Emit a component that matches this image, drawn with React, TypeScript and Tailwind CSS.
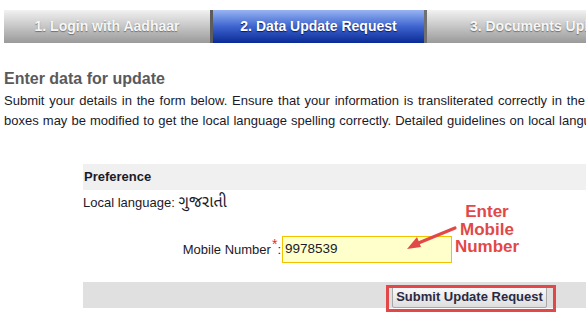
import React from "react";

export default function App() {
  return (
    <div className="relative w-[586px] h-[327px] overflow-hidden bg-white text-[#1c1c24]" style={{ fontFamily: '"Liberation Sans", Arial, sans-serif' }}>
      {/* Tabs */}
      <div className="flex pt-[10px] pl-[4px]">
        <div className="flex h-[33px] w-[206px] shrink-0 items-center justify-center bg-gradient-to-b from-[#f2f2f2] via-[#c6c6c6] to-[#9a9a9a] text-[14px] font-bold text-[#f6f6f6] [text-shadow:0_1px_1px_#707070]">
          1. Login with Aadhaar
        </div>
        <div className="flex h-[33px] w-[214px] shrink-0 items-center justify-center border-l-[3px] border-[#5c5c5c] bg-gradient-to-b from-[#98b4f2] via-[#3f64cf] to-[#0a2a96] text-[14px] font-bold text-white [text-shadow:0_1px_1px_#0a1a60]">
          2. Data Update Request
        </div>
        <div className="flex h-[33px] w-[232px] shrink-0 items-center justify-center border-l-[3px] border-[#707070] bg-gradient-to-b from-[#f2f2f2] via-[#c6c6c6] to-[#9a9a9a] text-[14px] font-bold text-[#f6f6f6] [text-shadow:0_1px_1px_#707070]">
          3. Documents Upload
        </div>
      </div>

      {/* Heading */}
      <div className="mt-[27px] pl-[4px] text-[16px] font-bold leading-[18px] text-[#5a5a5a]">
        Enter data for update
      </div>
      <div className="mt-[3px] pl-[4px] text-[13px] leading-[19.5px] whitespace-nowrap text-[#1a1a2a]">
        <div className="[word-spacing:1.2px]">
          Submit your details in the form below. Ensure that your information is transliterated correctly in the local language. The text in the local language
        </div>
        <div className="[word-spacing:0.5px]">
          boxes may be modified to get the local language spelling correctly. Detailed guidelines on local language transliteration are available.
        </div>
      </div>

      {/* Form */}
      <div className="ml-[83px] mt-[34px]">
        <div className="flex h-[26px] items-center bg-[#f0f0f0] pl-[1px] text-[13px] font-bold text-[#1a1a2a]">
          Preference
        </div>
        <div className="mt-[3px] flex items-baseline text-[13px] leading-[20px] text-[#1a1a2a]">
          <span>Local language:&nbsp;</span>
          <span className="text-[16px]" style={{ fontFamily: '"Noto Sans Gujarati", "Noto Sans", "DejaVu Sans", sans-serif' }}>ગુજરાતી</span>
        </div>
        <div className="mt-[22px] flex items-center">
          <div className="w-[199px] shrink-0 pr-[1px] text-right text-[13px] text-[#1a1a2a]">
            Mobile Number<span className="relative -top-[5px] ml-[1px] text-[14px] leading-[0] text-[#e03030]">*</span>:
          </div>
          <div className="flex h-[27px] w-[170px] shrink-0 items-center border border-[#f2c200] bg-[#ffffcc] pl-[2px] text-[13.5px] text-[#1a1a2a]">
            9978539
          </div>
        </div>
        <div className="mt-[19px] flex h-[26px] items-end bg-[#e0e0e0]">
          <div className="ml-[309px] flex h-[22px] w-[155px] shrink-0 items-center justify-center rounded-[2px] border border-[#a8a8a8] bg-gradient-to-b from-[#fafafa] to-[#dedede] text-[13px] font-bold text-[#2a2a44]">
            Submit Update Request
          </div>
        </div>
      </div>

      {/* Annotations */}
      <div className="absolute left-[386px] top-[285px] h-[27px] w-[170px] border-[3px] border-[#e24848]" />
      <div className="absolute left-[447px] top-[203px] w-[80px] text-center text-[17px] font-bold leading-[17.5px] text-[#e24848]">
        Enter
        <br />
        Mobile
        <br />
        Number
      </div>
      <svg className="absolute left-[400px] top-[222px]" width="60" height="32" viewBox="0 0 60 32">
        <line x1="55" y1="6" x2="16" y2="22" stroke="#e24848" strokeWidth="3.2" strokeLinecap="round" />
        <polygon points="7,27 17,15 21,25" fill="#e24848" />
      </svg>
    </div>
  );
}
